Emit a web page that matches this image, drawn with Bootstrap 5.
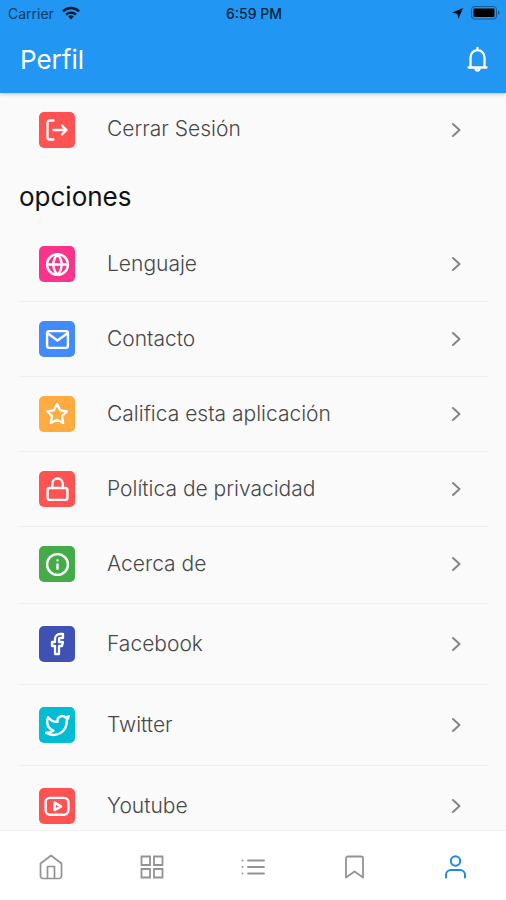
<!DOCTYPE html>
<html lang="es">
<head>
<meta charset="utf-8">
<meta name="viewport" content="width=device-width, initial-scale=1">
<title>Perfil</title>
<link href="https://cdn.jsdelivr.net/npm/bootstrap@5.3.0/dist/css/bootstrap.min.css" rel="stylesheet">
<style>
  body { font-family: Inter, "Open Sans", sans-serif; background: #fafafa; color: #111; }
  svg { display: block; fill: none; stroke: currentColor; stroke-linecap: round; stroke-linejoin: round; stroke-width: 2; }
  .app-header { background: #2196f3; box-shadow: 0 1px 4px rgba(0, 0, 0, .25); z-index: 1; }
  .status-bar { height: 26px; font-size: 14px; padding: 0 6px 0 8px; }
  .status-side { color: #0b3d68; }
  .status-clock { font-weight: 500; color: #06243d; }
  .title-bar { height: 67px; padding: 0 14px 0 20px; }
  .page-title { font-size: 26px; line-height: 32px; font-weight: 400; }
  .content-area { min-height: 0; scrollbar-width: none; padding: 0 18px 0 19px; }
  .content-area::-webkit-scrollbar { display: none; }
  .section-title { font-size: 26px; line-height: 32px; font-weight: 400; margin: 16px 0 13px; }
  .option-row { display: flex; align-items: center; height: 75px; padding: 0 24px 0 20px; border-top: 1px solid #efefef; color: #484848; text-decoration: none; font-size: 21px; font-weight: 300; line-height: 24px; }
  .option-row.no-rule { border-top-color: transparent; }
  .sign-out-row { height: 72px; }
  .social-group { margin-top: 2px; }
  .social-group .option-row { height: 81px; }
  .option-label { flex: 1; margin-left: 32px; padding-bottom: 1px; }
  .option-icon { width: 36px; height: 36px; border-radius: 5px; color: #fff; display: grid; place-items: center; }
  .option-icon svg { stroke-width: 2.3; }
  .chevron { color: #858585; }
  .c-red { background: #ff5252; } .c-pink { background: #f9358b; } .c-blue { background: #448aff; }
  .c-orange { background: #ffab40; } .c-green { background: #43ac48; } .c-indigo { background: #3f51b5; } .c-cyan { background: #00bcd4; }
  .tab-bar { background: #fff; height: 70px; border-top: 1px solid #f2f2f2; }
  .tab-bar a { color: #939393; padding-top: 2px; }
  .tab-bar a.current { color: #1e88e5; }
</style>
<script src="https://cdn.jsdelivr.net/npm/bootstrap@5.3.0/dist/js/bootstrap.bundle.min.js"></script>
</head>
<body>
<div class="vh-100 d-flex flex-column overflow-hidden">
  <header class="app-header flex-shrink-0">
    <div class="status-bar d-flex align-items-center">
      <div class="status-side col d-flex align-items-center gap-2">
        <span>Carrier</span>
        <svg width="18" height="14" viewBox="0 0 18 14"><path stroke="#051a2c" stroke-linecap="butt" stroke-width="2.400" d="M1 5.300a11.400 11.400 0 0 1 16 0M4 8.600a7.200 7.200 0 0 1 10 0"/><path fill="#051a2c" stroke="none" d="M9 13.500 6.200 10.600a4 4 0 0 1 5.600 0z"/></svg>
      </div>
      <span class="status-clock">6:59 PM</span>
      <div class="col d-flex align-items-center justify-content-end gap-2">
        <svg width="11" height="11" viewBox="0 0 11 11"><path fill="#04121e" stroke="none" d="M11 0 6.400 11 5.300 5.700 0 4.700z"/></svg>
        <svg width="29" height="14" viewBox="0 0 29 14"><rect x=".5" y=".5" width="25" height="12.500" rx="3" stroke="#145a92" stroke-width="1"/><rect x="2.500" y="2.500" width="21" height="8.500" rx="1" fill="#000" stroke="none"/><path fill="#145a92" stroke="none" d="M27 4.500q3 2.200 0 4.500z"/></svg>
      </div>
    </div>
    <div class="title-bar d-flex align-items-center justify-content-between">
      <h1 class="page-title text-white m-0">Perfil</h1>
      <button type="button" class="btn p-0 border-0 text-white" aria-label="Notificaciones">
        <svg width="28" height="28" viewBox="0 0 28 28"><path stroke-width="2.300" d="M4.500 21.500h18M6.500 21.500V11.500a7 7.500 0 0 1 14 0v10M13.500 4V2M11.500 22.300a2 2.300 0 0 0 4 0"/></svg>
      </button>
    </div>
  </header>

  <main class="content-area flex-grow-1 overflow-auto">
    <a href="#" class="option-row sign-out-row no-rule">
      <span class="option-icon c-red"><svg width="24" height="24" viewBox="0 0 24 24"><path d="M8.500 2.500H4.500a2 2 0 0 0-2 2v15a2 2 0 0 0 2 2h4M8.500 12h13M17 7.500l4.500 4.500-4.500 4.500"/></svg></span>
      <span class="option-label">Cerrar Sesión</span>
      <svg class="chevron" width="16" height="16" viewBox="0 0 16 16"><path d="M5 2l6.500 6L5 14"/></svg>
    </a>
    <h2 class="section-title">opciones</h2>
    <nav aria-label="opciones">
      <a href="#" class="option-row no-rule">
        <span class="option-icon c-pink"><svg width="25" height="25" viewBox="0 0 24 24"><circle cx="12" cy="12" r="10"/><path d="M2 12h20M12 2a15.300 15.300 0 0 1 4 10 15.300 15.300 0 0 1-4 10 15.300 15.300 0 0 1-4-10 15.300 15.300 0 0 1 4-10z"/></svg></span>
        <span class="option-label">Lenguaje</span>
        <svg class="chevron" width="16" height="16" viewBox="0 0 16 16"><path d="M5 2l6.500 6L5 14"/></svg>
      </a>
      <a href="#" class="option-row">
        <span class="option-icon c-blue"><svg width="25" height="25" viewBox="0 0 24 24"><rect x="2" y="4" width="20" height="16" rx="2"/><path d="M21.500 6 12 13 2.500 6"/></svg></span>
        <span class="option-label">Contacto</span>
        <svg class="chevron" width="16" height="16" viewBox="0 0 16 16"><path d="M5 2l6.500 6L5 14"/></svg>
      </a>
      <a href="#" class="option-row">
        <span class="option-icon c-orange"><svg width="24" height="24" viewBox="0 0 24 24"><path d="M12 2l3.090 6.260L22 9.270l-5 4.870 1.180 6.880L12 17.770l-6.180 3.250L7 14.140 2 9.270l6.910-1.010L12 2z"/></svg></span>
        <span class="option-label">Califica esta aplicación</span>
        <svg class="chevron" width="16" height="16" viewBox="0 0 16 16"><path d="M5 2l6.500 6L5 14"/></svg>
      </a>
      <a href="#" class="option-row">
        <span class="option-icon c-red"><svg width="25" height="25" viewBox="0 0 24 24"><rect x="2.500" y="10.500" width="19" height="11.500" rx="2"/><path d="M7 10.500V6.500a5 5 0 0 1 10 0v4"/></svg></span>
        <span class="option-label">Política de privacidad</span>
        <svg class="chevron" width="16" height="16" viewBox="0 0 16 16"><path d="M5 2l6.500 6L5 14"/></svg>
      </a>
      <a href="#" class="option-row">
        <span class="option-icon c-green"><svg width="25" height="25" viewBox="0 0 24 24"><circle cx="12" cy="12" r="10"/><path d="M12 16v-4M12 8h.01"/></svg></span>
        <span class="option-label">Acerca de</span>
        <svg class="chevron" width="16" height="16" viewBox="0 0 16 16"><path d="M5 2l6.500 6L5 14"/></svg>
      </a>
      <div class="social-group">
        <a href="#" class="option-row">
          <span class="option-icon c-indigo"><svg width="24" height="24" viewBox="0 0 24 24"><path d="M18 2h-3a5 5 0 0 0-5 5v3H7v4h3v8h4v-8h3l1-4h-4V7a1 1 0 0 1 1-1h3z"/></svg></span>
          <span class="option-label">Facebook</span>
          <svg class="chevron" width="16" height="16" viewBox="0 0 16 16"><path d="M5 2l6.500 6L5 14"/></svg>
        </a>
        <a href="#" class="option-row">
          <span class="option-icon c-cyan"><svg width="25" height="25" viewBox="0 0 24 24"><path d="M23 3a10.900 10.900 0 0 1-3.140 1.530 4.480 4.480 0 0 0-7.860 3v1A10.660 10.660 0 0 1 3 4s-4 9 5 13a11.640 11.640 0 0 1-7 2c9 5 20 0 20-11.500a4.500 4.500 0 0 0-.08-.830A7.720 7.720 0 0 0 23 3z"/></svg></span>
          <span class="option-label">Twitter</span>
          <svg class="chevron" width="16" height="16" viewBox="0 0 16 16"><path d="M5 2l6.500 6L5 14"/></svg>
        </a>
        <a href="#" class="option-row">
          <span class="option-icon c-red"><svg width="26" height="26" viewBox="0 0 24 24"><rect x="1.500" y="4.500" width="21" height="15.500" rx="4"/><path d="M9.700 8.800v7l6-3.500z"/></svg></span>
          <span class="option-label">Youtube</span>
          <svg class="chevron" width="16" height="16" viewBox="0 0 16 16"><path d="M5 2l6.500 6L5 14"/></svg>
        </a>
      </div>
    </nav>
  </main>

  <nav class="tab-bar d-flex flex-shrink-0" aria-label="Principal">
    <a href="#" class="col d-flex align-items-center justify-content-center" aria-label="Inicio"><svg width="26" height="26" viewBox="0 0 26 26"><path stroke-width="1.700" d="M2.500 9.500 13 1.500l10.500 8V22a2.500 2.500 0 0 1-2.500 2.500H5A2.500 2.500 0 0 1 2.500 22zM9.500 24.500v-12h7v12"/></svg></a>
    <a href="#" class="col d-flex align-items-center justify-content-center" aria-label="Categorías"><svg width="26" height="26" viewBox="0 0 26 26"><path stroke-width="1.800" stroke-linejoin="miter" d="M2.500 2.500h8.500v8.500H2.500zM15 2.500h8.500v8.500H15zM2.500 15h8.500v8.500H2.500zM15 15h8.500v8.500H15z"/></svg></a>
    <a href="#" class="col d-flex align-items-center justify-content-center" aria-label="Lista"><svg width="26" height="26" viewBox="0 0 26 26"><path stroke-width="1.800" d="M8 6.500h16M8 13h16M8 19.500h16M2.500 6.500h.01M2.500 13h.01M2.500 19.500h.01"/></svg></a>
    <a href="#" class="col d-flex align-items-center justify-content-center" aria-label="Guardados"><svg width="26" height="26" viewBox="0 0 26 26"><path stroke-width="1.800" d="M22 23.500 13.500 17.500l-8.500 6V4.500a2 2 0 0 1 2-2h13a2 2 0 0 1 2 2z"/></svg></a>
    <a href="#" class="col d-flex align-items-center justify-content-center current" aria-label="Perfil" aria-current="page"><svg width="26" height="26" viewBox="0 0 26 26"><path d="M4 23.500v-2.500a5 5 0 0 1 5-5h9a5 5 0 0 1 5 5v2.500"/><circle cx="13.500" cy="7" r="4.700"/></svg></a>
  </nav>
</div>
</body>
</html>
